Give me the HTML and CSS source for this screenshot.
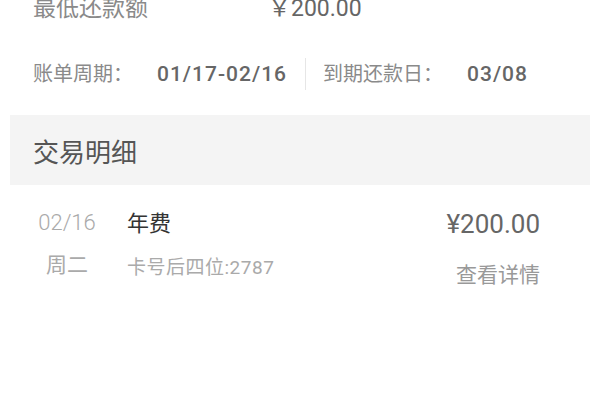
FILE: index.html
```html
<!DOCTYPE html>
<html lang="zh-CN">
<head>
<meta charset="utf-8">
<link rel="stylesheet" href="styles.css">
</head>
<body>
<div class="summary">
  <div class="min-row">
    <span class="min-label">最低还款额</span>
    <span class="min-value">￥200.00</span>
  </div>
  <div class="cycle-row">
    <span class="cycle-label">账单周期：</span>
    <span class="cycle-value">01/17-02/16</span>
    <span class="divider"></span>
    <span class="cycle-label">到期还款日：</span>
    <span class="cycle-value">03/08</span>
  </div>
</div>
<div class="section-header">交易明细</div>
<div class="txn">
  <div class="txn-date">
    <span class="date">02/16</span>
    <span class="weekday">周二</span>
  </div>
  <div class="txn-main">
    <span class="txn-title">年费</span>
    <span class="txn-card">卡号后四位:2787</span>
  </div>
  <div class="txn-side">
    <span class="txn-amount">¥200.00</span>
    <span class="txn-link">查看详情</span>
  </div>
</div>
</body>
</html>
```
FILE: styles.css
```css
html, body {
  margin: 0;
  padding: 0;
  background: #ffffff;
}
body {
  font-family: "Roboto", "Noto Sans CJK SC", sans-serif;
  color: #555;
}
.summary {
  padding: 0 33px;
}
.min-row {
  display: flex;
  align-items: center;
  margin-top: -3px;
  height: 24px;
}
.min-label {
  width: 235px;
  font-size: 23px;
  line-height: 24px;
  color: #8a8a8a;
}
.min-value {
  font-size: 23px;
  line-height: 24px;
  color: #666;
}
.cycle-row {
  display: flex;
  align-items: center;
  margin-top: 37px;
  height: 32px;
}
.cycle-label {
  font-size: 20px;
  line-height: 24px;
  color: #8a8a8a;
}
.cycle-value {
  font-size: 21px;
  line-height: 24px;
  font-weight: 500;
  color: #666;
  margin-left: 24px;
  letter-spacing: 1px;
}
.divider {
  width: 1px;
  height: 32px;
  background: #e6e6e6;
  margin: 0 17px 0 18px;
}
.section-header {
  margin: 25px 10px 0;
  height: 70px;
  background: #f4f4f4;
  display: flex;
  align-items: center;
  padding-left: 23px;
  font-size: 26px;
  color: #555;
}
.txn {
  display: flex;
  padding: 26px 60px 0 36px;
}
.txn-date {
  display: flex;
  flex-direction: column;
  align-items: center;
  width: 62px;
}
.date {
  font-size: 22px;
  font-weight: 300;
  line-height: 24px;
  color: #aaa;
}
.weekday {
  margin-top: 18px;
  font-size: 21px;
  line-height: 24px;
  color: #aaa;
}
.txn-main {
  display: flex;
  flex-direction: column;
  margin-left: 29px;
  flex: 1;
}
.txn-title {
  font-size: 22px;
  line-height: 26px;
  color: #333;
}
.txn-card {
  margin-top: 21px;
  font-size: 19px;
  line-height: 20px;
  letter-spacing: 0.5px;
  color: #aaa;
}
.txn-side {
  display: flex;
  flex-direction: column;
  align-items: flex-end;
}
.txn-amount {
  font-size: 26px;
  line-height: 26px;
  color: #666;
}
.txn-link {
  margin-top: 27px;
  font-size: 21px;
  line-height: 22px;
  color: #999;
}
```
